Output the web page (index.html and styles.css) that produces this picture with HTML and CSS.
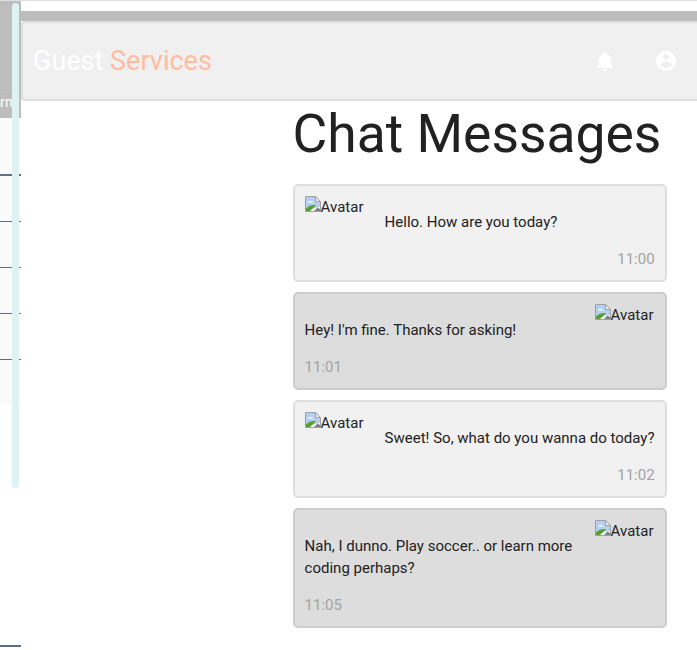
FILE: index.html
```html
<!DOCTYPE html>
<html lang="en">
<head>
<meta charset="utf-8">
<title>Chat Messages</title>
<link rel="stylesheet" href="styles.css">
</head>
<body>
<svg class="defs" width="0" height="0" aria-hidden="true">
  <symbol id="broken" viewBox="0 0 16 16">
    <path d="M.5.5h10l5 5v10H.5z" fill="#fff" stroke="#a0a0a0"/>
    <path d="M1 1h9.500v5h4.500v5L1 14z" fill="#b5cff0"/>
    <path d="M3 6.500c0-1.500 1.800-2 2.800-1.100 1-.6 2.500 0 2.400 1.100z" fill="#fff"/>
    <path d="M1 15v-2.500C4 9.500 8 8.500 11 9.300L5 15z" fill="#57a02f"/>
    <path d="M9 15l3.500-3.500L15 13v2z" fill="#808080"/>
    <path d="M10.500.5v5h5z" fill="#eee" stroke="#a0a0a0"/>
  </symbol>
</svg>
<div class="page">
  <aside class="side">
    <div class="side-head"><span class="side-word">rm</span></div>
    <div class="side-table">
      <div class="side-row first"></div>
      <div class="side-row"></div>
      <div class="side-row"></div>
      <div class="side-row"></div>
      <div class="side-row"></div>
    </div>
    <div class="side-end"></div>
  </aside>
  <main class="main">
    <div class="band"></div>
    <header class="nav">
      <div class="brand">Guest <span class="brand-accent">Services</span></div>
      <div class="nav-icons">
        <svg class="icon" viewBox="0 0 24 24"><path fill="#fff" d="M12 22c1.100 0 2-.9 2-2h-4c0 1.100.9 2 2 2zm6-6v-5c0-3.070-1.630-5.640-4.500-6.320V4c0-.83-.67-1.500-1.500-1.500s-1.500.67-1.500 1.500v.68C7.640 5.360 6 7.920 6 11v5l-2 2v1h16v-1l-2-2z"/></svg>
        <svg class="icon" viewBox="0 0 24 24"><path fill="#fff" d="M12 2C6.480 2 2 6.480 2 12s4.480 10 10 10 10-4.480 10-10S17.520 2 12 2zm0 3c1.660 0 3 1.340 3 3s-1.340 3-3 3-3-1.340-3-3 1.340-3 3-3zm0 14.200c-2.500 0-4.710-1.280-6-3.220.03-1.990 4-3.080 6-3.080 1.990 0 5.970 1.090 6 3.080-1.290 1.940-3.500 3.220-6 3.220z"/></svg>
      </div>
    </header>
    <section class="chat">
      <h1 class="title">Chat Messages</h1>
      <article class="msg">
        <div class="avatar"><svg class="broken"><use href="#broken"/></svg>Avatar</div>
        <p class="text">Hello. How are you today?</p>
        <time class="time right">11:00</time>
      </article>
      <article class="msg dark">
        <div class="avatar end"><svg class="broken"><use href="#broken"/></svg>Avatar</div>
        <p class="text">Hey! I'm fine. Thanks for asking!</p>
        <time class="time">11:01</time>
      </article>
      <article class="msg">
        <div class="avatar"><svg class="broken"><use href="#broken"/></svg>Avatar</div>
        <p class="text">Sweet! So, what do you wanna do today?</p>
        <time class="time right">11:02</time>
      </article>
      <article class="msg dark">
        <div class="avatar end"><svg class="broken"><use href="#broken"/></svg>Avatar</div>
        <p class="text">Nah, I dunno. Play soccer.. or learn more coding perhaps?</p>
        <time class="time">11:05</time>
      </article>
    </section>
  </main>
</div>
<div class="thumb"></div>
</body>
</html>
```
FILE: styles.css
```css
* { box-sizing: border-box; }
html, body { margin: 0; padding: 0; }
body {
  width: 697px;
  height: 650px;
  overflow: hidden;
  background: #fff;
  color: #212529;
  font-family: Roboto, "Liberation Sans", sans-serif;
  font-size: 15px;
  line-height: 22px;
  border-top: 1px solid #dfe0e6;
}
.defs { position: absolute; }
.page { display: flex; height: 649px; }

.side { width: 21px; flex: none; display: flex; flex-direction: column; overflow: hidden; }
.side-head {
  height: 117px;
  background: #bdbdbd;
  position: relative;
  padding-top: 91px;
  display: flex;
  color: #f5f5f5;
  font-weight: 500;
  font-size: 14px;
  line-height: 20px;
  white-space: nowrap;
}
.side-head::before {
  content: "";
  position: absolute;
  left: 0; right: 0; top: 87px;
  height: 1px;
  background: #c4c0bc;
}
.side-word { display: block; flex: none; }
.side-table { background: #fafafa; height: 287px; padding-top: 56px; }
.side-row { height: 46px; border-bottom: 1px solid #5f6f88; }
.side-row.first { height: 2px; border-bottom: 2px solid #5f6f88; }
.side-end { margin-top: 240px; height: 2px; background: #5f6f88; }

.main { flex: 1; min-width: 0; padding-top: 10px; }
.band { height: 10px; background: #bdbdbd; }
.nav {
  height: 80px;
  background: #f0f0f0;
  border: 2px solid #dedede;
  border-right: 0;
  border-radius: 4px 0 0 4px;
  display: flex;
  align-items: center;
  justify-content: space-between;
  padding-left: 10px;
}
.brand { color: #fff; font-size: 27px; line-height: 36px; }
.brand-accent { color: #ffbda0; }
.nav-icons { display: flex; gap: 37px; padding-right: 19px; }
.icon { width: 24px; height: 24px; display: block; }

.chat { margin-left: 271.6px; width: 374px; }
.title {
  margin: 0;
  padding-top: 2px;
  font-weight: 400;
  font-size: 53.4px;
  line-height: 61px;
  height: 83px;
  white-space: nowrap;
  color: #212121;
}
.msg {
  border: 2px solid #dedede;
  background: #f1f1f1;
  border-radius: 5px;
  padding: 10px;
  margin-bottom: 10px;
  min-height: 98px;
  position: relative;
  display: flow-root;
}
.msg.dark { background: #ddd; border-color: #ccc; }
.avatar {
  float: left;
  width: 60px;
  height: 22px;
  margin-right: 20px;
  white-space: nowrap;
  display: flex;
  align-items: flex-start;
  line-height: 22px;
}
.avatar.end { float: right; margin-right: 0; margin-left: 20px; }
.broken { width: 16px; height: 16px; flex: none; }
.text { margin: 0; padding-top: 15px; color: #212121; }
.time { display: block; clear: both; padding-top: 16px; color: #a3a3a3; line-height: 21px; }
.time.right { text-align: right; }

.thumb {
  position: absolute;
  left: 12px;
  top: 3px;
  width: 7px;
  height: 485px;
  border-radius: 4px;
  background: #dff2f2;
}
```
